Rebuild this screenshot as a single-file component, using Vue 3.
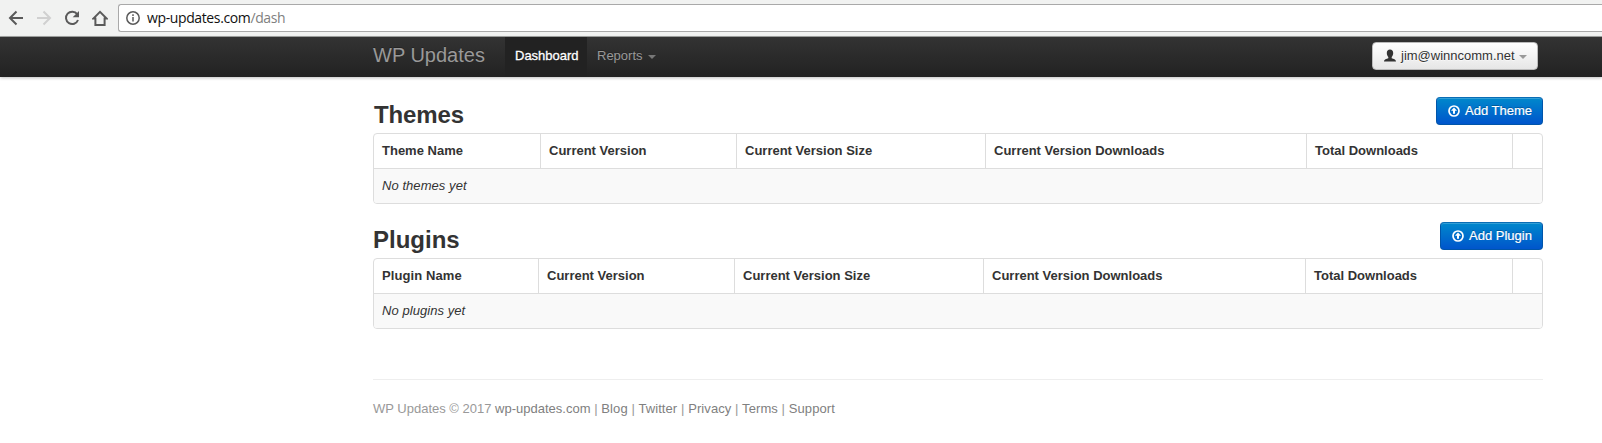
<script setup>
const sections = [
  {
    id: 'themes',
    title: 'Themes',
    action: 'Add Theme',
    empty: 'No themes yet',
    columns: ['Theme Name', 'Current Version', 'Current Version Size', 'Current Version Downloads', 'Total Downloads', ''],
  },
  {
    id: 'plugins',
    title: 'Plugins',
    action: 'Add Plugin',
    empty: 'No plugins yet',
    columns: ['Plugin Name', 'Current Version', 'Current Version Size', 'Current Version Downloads', 'Total Downloads', ''],
  },
]
const links = ['Blog', 'Twitter', 'Privacy', 'Terms', 'Support']
</script>

<template>
  <div class="page">
    <header class="browser">
      <svg class="tool" viewBox="0 0 16 16"><path d="M15 8H2.500M8.500 1.500L2 8l6.500 6.500" /></svg>
      <svg class="tool off" viewBox="0 0 16 16"><path d="M1 8h12.500M7.500 1.500L14 8l-6.500 6.500" /></svg>
      <svg class="tool" viewBox="0 0 16 16"><path d="M13.200 4.200A6.200 6.200 0 1 0 14 10" /><path class="solid" d="M15 1v6.300H8.700z" /></svg>
      <svg class="tool home" viewBox="0 0 16 16"><path d="M1.300 8.600L8 1.900l6.700 6.700H12.600V15H3.400V8.600z" /></svg>
      <div class="address">
        <svg class="info" viewBox="0 0 14 14"><circle cx="7" cy="7" r="6.200" /><path d="M7 6v4.500M7 3.300v1.600" /></svg>
        <span class="url">wp-updates.com<span class="path">/dash</span></span>
      </div>
    </header>

    <nav class="navbar">
      <div class="container nav-inner">
        <a class="brand">WP Updates</a>
        <a class="nav-link active"><span>Dashboard</span></a>
        <a class="nav-link reports"><span>Reports</span><i class="caret"></i></a>
        <button class="user">
          <svg viewBox="0 0 14 14"><path d="M7 .5c2 0 3.200 1.500 3.200 3.500 0 1.700-.7 3-1.500 3.900v1.300c1.700.6 4.300 1.100 4.300 3.300H1c0-2.200 2.600-2.700 4.300-3.300V7.900C4.500 7 3.800 5.700 3.800 4 3.800 2 5 .5 7 .5z" /></svg>
          <span>jim@winncomm.net</span><i class="caret"></i>
        </button>
      </div>
    </nav>

    <main class="container">
      <section v-for="s in sections" :key="s.id" :class="['block', s.id]">
        <div class="heading">
          <h2>{{ s.title }}</h2>
          <button class="add">
            <svg viewBox="0 0 12 12"><circle cx="6" cy="6" r="5" /><path d="M6 2.500l3 3.200H7v3H5v-3H3z" /></svg>
            <span>{{ s.action }}</span>
          </button>
        </div>
        <div class="table">
          <div class="row head">
            <div v-for="(c, i) in s.columns" :key="i" class="cell"><span>{{ c }}</span></div>
          </div>
          <div class="row empty"><em>{{ s.empty }}</em></div>
        </div>
      </section>
      <footer>
        <span>WP Updates © 2017 <a>wp-updates.com</a><span class="links"><template v-for="l in links" :key="l"> | <a>{{ l }}</a></template></span></span>
      </footer>
    </main>
  </div>
</template>

<style>
body { margin: 0; background: #fff; }
</style>

<style scoped>
.page { height: 443px; overflow: hidden; font: 13px/18px "Liberation Sans", Arial, sans-serif; color: #333; }
.browser { box-sizing: border-box; height: 37px; display: flex; align-items: flex-start; padding: 4px 0 0 8px; background: #f1f2f1; border-bottom: 1px solid #a3a5a3; }
.tool { width: 16px; height: 16px; margin: 6px 12px 0 0; fill: none; stroke: #5a5a5a; stroke-width: 2; }
.tool.off { stroke: #d0d0d0; }
.tool .solid { fill: #5a5a5a; stroke: none; }
.tool.home { margin-right: 10px; }
.address { box-sizing: border-box; flex: 1; height: 28px; display: flex; align-items: center; background: #fff; border: 1px solid #a9a9a9; border-right: 0; border-radius: 3px 0 0 3px; padding-left: 7px; }
.info { width: 14px; height: 14px; fill: none; stroke: #5a5a5a; stroke-width: 1.5; }
.url { margin-left: 7px; font: 14px/20px "Open Sans", sans-serif; color: #111; letter-spacing: -0.38px; }
.path { color: #808080; }
.container { width: 1170px; margin-left: 373px; }
.navbar { height: 40px; background: linear-gradient(#333, #222); box-shadow: 0 1px 3px rgba(0, 0, 0, .25); }
.nav-inner { display: flex; height: 40px; color: #999; text-shadow: 0 -1px 0 rgba(0, 0, 0, .25); }
.brand { width: 132px; font-size: 20px; line-height: 36px; }
.nav-link { box-sizing: border-box; display: flex; height: 40px; padding: 10px 0 0 10px; }
.active { width: 82px; background: #222; color: #fff; -webkit-text-stroke: .3px #fff; }
.caret { width: 0; height: 0; border: 4px solid transparent; border-top-color: currentColor; border-bottom: 0; margin: 8px 0 0 5px; opacity: .7; }
.user { box-sizing: border-box; width: 166px; height: 28px; display: flex; margin: 5px 5px 0 auto; padding: 4px 0 0 10px; border: 1px solid #bbb; border-radius: 4px; background: linear-gradient(#fff, #e6e6e6); font: inherit; color: #333; text-shadow: 0 1px 1px rgba(255, 255, 255, .75); }
.user svg { width: 14px; height: 14px; margin: 2px 4px 0 0; fill: #333; }
.user .caret { border-top-color: #999; margin-left: 4px; opacity: 1; }
.block { height: 125px; }
main { padding-top: 20px; }
.heading { height: 36px; display: flex; justify-content: space-between; }
h2 { margin: 0; font-size: 24px; line-height: 36px; }
.themes h2 { padding-left: 1px; letter-spacing: -0.1px; }
.add { box-sizing: border-box; width: 107px; height: 28px; display: flex; padding: 4px 0 0 11px; border: 1px solid #05a; border-top-color: #0a6db5; border-radius: 4px; background: linear-gradient(#08c, #05c); box-shadow: inset 0 1px 0 rgba(255, 255, 255, .2); color: #fff; font: inherit; text-shadow: 0 -1px 0 rgba(0, 0, 0, .25); -webkit-text-stroke: .2px #fff; }
.plugins .add { width: 103px; }
.add svg { width: 12px; height: 12px; margin: 3px 5px 0 0; fill: #fff; }
.add circle { fill: none; stroke: #fff; stroke-width: 1.700; }
.table { box-sizing: border-box; height: 71px; border: 1px solid #ddd; border-radius: 4px; overflow: hidden; }
.head { display: grid; grid-template-columns: 166px 196px 249px 321px 206px 30px; height: 34px; font-weight: bold; }
.plugins .head { grid-template-columns: 164px 196px 249px 322px 207px 30px; }
.cell { padding: 8px; white-space: nowrap; }
.cell + .cell { border-left: 1px solid #ddd; }
.plugins .cell:first-child { letter-spacing: .1px; }
.empty { height: 18px; padding: 8px; border-top: 1px solid #ddd; background: #f9f9f9; letter-spacing: .06px; }
footer { margin-top: 32px; border-top: 1px solid #eee; padding-top: 20px; color: #999; }
footer a { color: #808080; }
.links { letter-spacing: .09px; }
</style>
